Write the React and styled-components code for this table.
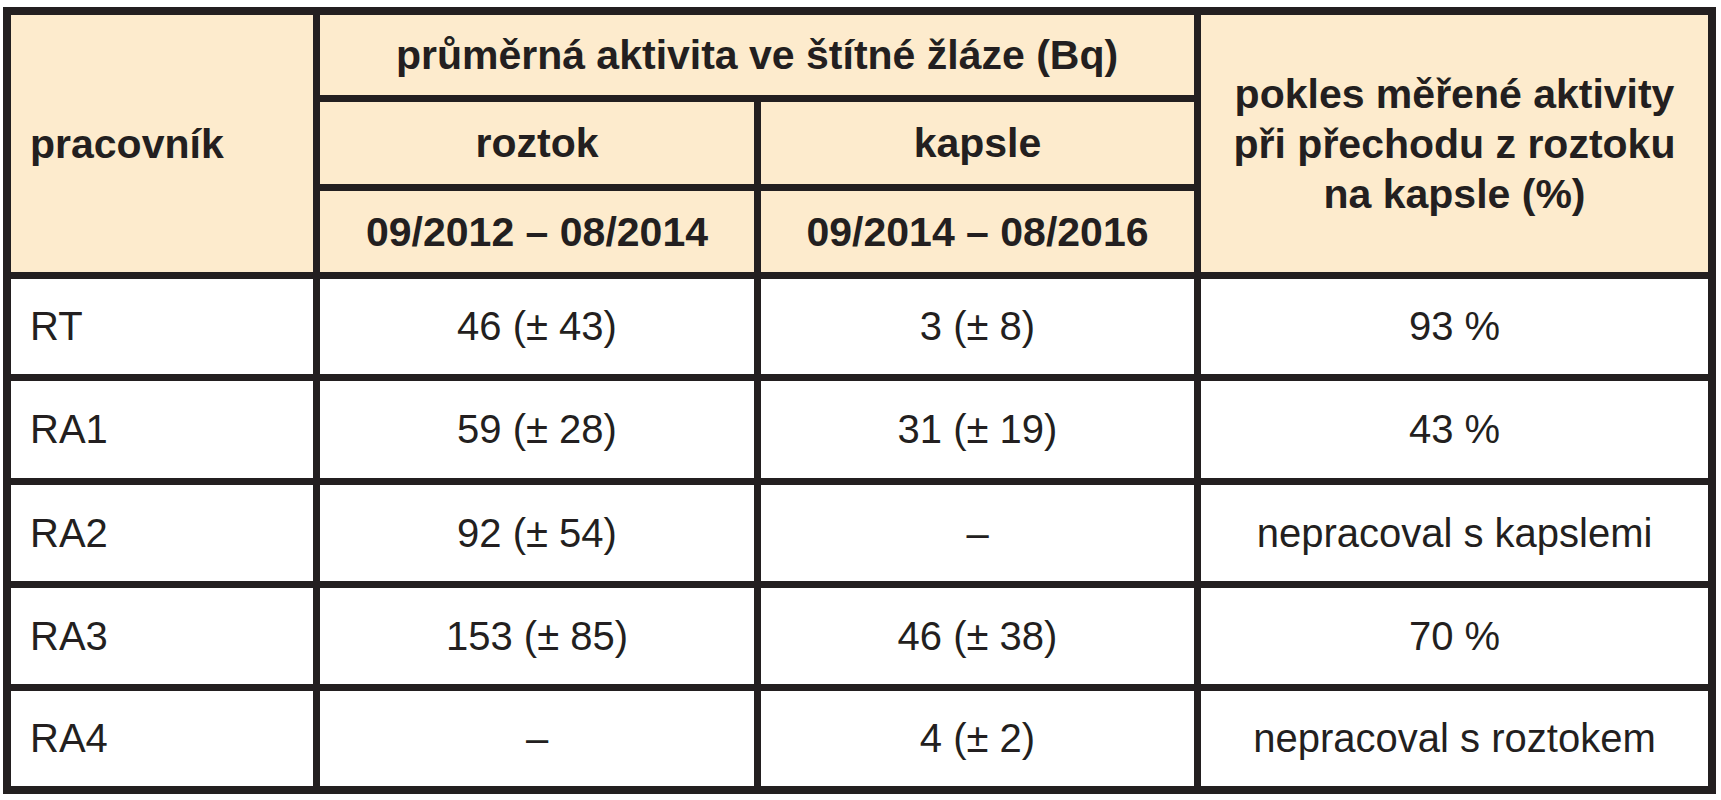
import React from 'react';
import styled, { createGlobalStyle } from 'styled-components';

const GlobalStyle = createGlobalStyle`
  html, body {
    margin: 0;
    padding: 0;
    background: #fff;
  }
  body {
    font-family: "Liberation Sans", Arial, sans-serif;
    color: #231f20;
  }
`;

const Page = styled.div`
  padding: 7px 5px 7px 3px;
`;

const Table = styled.table`
  border-collapse: separate;
  border-spacing: 7px;
  border: 1px solid #231f20;
  background: #231f20;
  table-layout: fixed;
  width: 1713px;
`;

const Row = styled.tr`
  height: ${p => p.h}px;
`;

const HeadCell = styled.th`
  background: #fdebcd;
  font-weight: bold;
  font-size: 41px;
  line-height: 50px;
  padding: 0 ${p => (p.left ? '0 0 19px' : '0')};
  text-align: ${p => (p.left ? 'left' : 'center')};
  vertical-align: middle;
`;

const Cell = styled.td`
  background: #fff;
  font-size: 40px;
  padding: ${p => (p.left ? '0 0 0 19px' : '0')};
  text-align: ${p => (p.left ? 'left' : 'center')};
  vertical-align: middle;
  white-space: nowrap;
`;

const rows = [
  { name: 'RT', roztok: '46 (± 43)', kapsle: '3 (± 8)', pokles: '93 %', h: 95 },
  { name: 'RA1', roztok: '59 (± 28)', kapsle: '31 (± 19)', pokles: '43 %', h: 97 },
  { name: 'RA2', roztok: '92 (± 54)', kapsle: '–', pokles: 'nepracoval s kapslemi', h: 96 },
  { name: 'RA3', roztok: '153 (± 85)', kapsle: '46 (± 38)', pokles: '70 %', h: 96 },
  { name: 'RA4', roztok: '–', kapsle: '4 (± 2)', pokles: 'nepracoval s roztokem', h: 95 }
];

const App = () => {
  return (
    <Page>
      <GlobalStyle />
      <Table>
        <colgroup>
          <col style={{ width: 302 }} />
          <col style={{ width: 434 }} />
          <col style={{ width: 433 }} />
          <col style={{ width: 507 }} />
        </colgroup>
        <thead>
          <Row h={80}>
            <HeadCell left rowSpan={3}>
              pracovník
            </HeadCell>
            <HeadCell colSpan={2}>průměrná aktivita ve štítné žláze (Bq)</HeadCell>
            <HeadCell rowSpan={3}>
              pokles měřené aktivity
              <br />
              při přechodu z roztoku
              <br />
              na kapsle (%)
            </HeadCell>
          </Row>
          <Row h={82}>
            <HeadCell>roztok</HeadCell>
            <HeadCell>kapsle</HeadCell>
          </Row>
          <Row h={81}>
            <HeadCell>09/2012 – 08/2014</HeadCell>
            <HeadCell>09/2014 – 08/2016</HeadCell>
          </Row>
        </thead>
        <tbody>
          {rows.map(r => (
            <Row h={r.h} key={r.name}>
              <Cell left>{r.name}</Cell>
              <Cell>{r.roztok}</Cell>
              <Cell>{r.kapsle}</Cell>
              <Cell>{r.pokles}</Cell>
            </Row>
          ))}
        </tbody>
      </Table>
    </Page>
  );
};

export default App;
